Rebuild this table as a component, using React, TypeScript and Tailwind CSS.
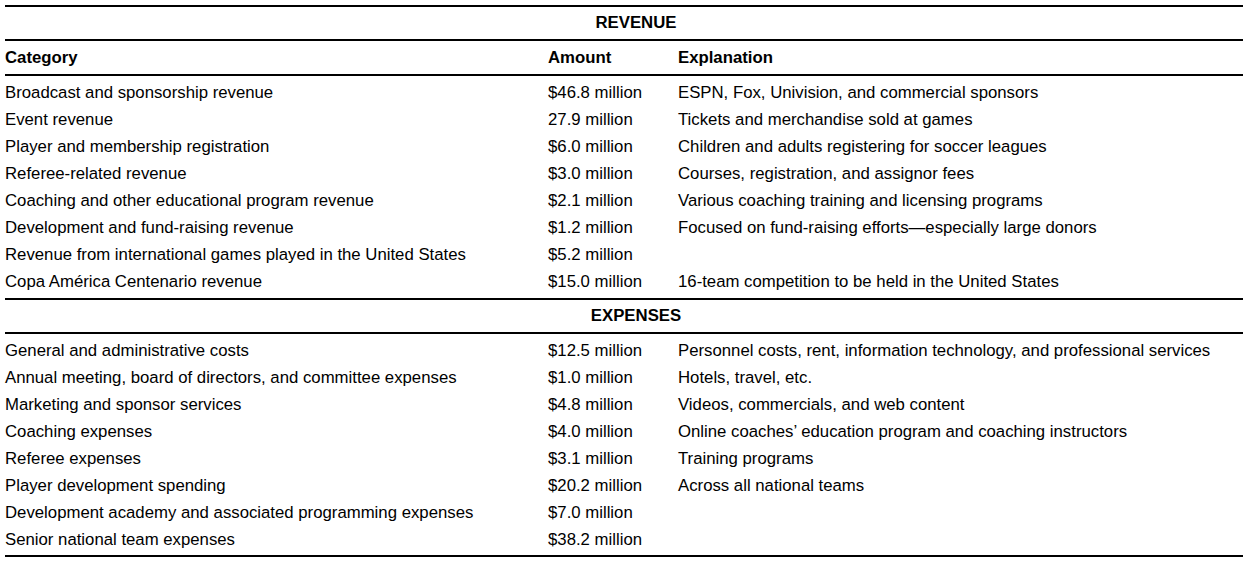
import React from 'react';

const revenue = [
  ['Broadcast and sponsorship revenue', '$46.8 million', 'ESPN, Fox, Univision, and commercial sponsors'],
  ['Event revenue', '27.9 million', 'Tickets and merchandise sold at games'],
  ['Player and membership registration', '$6.0 million', 'Children and adults registering for soccer leagues'],
  ['Referee-related revenue', '$3.0 million', 'Courses, registration, and assignor fees'],
  ['Coaching and other educational program revenue', '$2.1 million', 'Various coaching training and licensing programs'],
  ['Development and fund-raising revenue', '$1.2 million', 'Focused on fund-raising efforts\u2014especially large donors'],
  ['Revenue from international games played in the United States', '$5.2 million', ''],
  ['Copa Am\u00e9rica Centenario revenue', '$15.0 million', '16-team competition to be held in the United States'],
];

const expenses = [
  ['General and administrative costs', '$12.5 million', 'Personnel costs, rent, information technology, and professional services'],
  ['Annual meeting, board of directors, and committee expenses', '$1.0 million', 'Hotels, travel, etc.'],
  ['Marketing and sponsor services', '$4.8 million', 'Videos, commercials, and web content'],
  ['Coaching expenses', '$4.0 million', 'Online coaches\u2019 education program and coaching instructors'],
  ['Referee expenses', '$3.1 million', 'Training programs'],
  ['Player development spending', '$20.2 million', 'Across all national teams'],
  ['Development academy and associated programming expenses', '$7.0 million', ''],
  ['Senior national team expenses', '$38.2 million', ''],
];

const Row = ({ cells, bold = false }: { cells: string[]; bold?: boolean }) => (
  <div className={`grid grid-cols-[543px_130px_1fr] items-center h-[27px] leading-[27px] ${bold ? 'font-bold' : ''}`}>
    {cells.map((c, i) => (
      <div key={i} className="whitespace-nowrap">
        {c}
      </div>
    ))}
  </div>
);

const App = () => {
  return (
    <div className="w-[1243px] h-[564px] overflow-hidden bg-white text-black text-[16.75px] font-['Liberation_Sans',Arial,sans-serif]">
      <div className="ml-[5px] mt-[5px] w-[1262px]">
        {/* Revenue section */}
        <div className="border-y-2 border-black h-[36px] flex items-center justify-center font-bold">REVENUE</div>
        <div className="border-b-2 border-black h-[35px] flex items-center">
          <div className="w-full">
            <Row cells={['Category', 'Amount', 'Explanation']} bold />
          </div>
        </div>
        <div className="pt-[3px] pb-[3px]">
          {revenue.map((r, i) => (
            <Row key={i} cells={r} />
          ))}
        </div>

        {/* Expenses section */}
        <div className="border-y-2 border-black h-[36px] flex items-center justify-center font-bold">EXPENSES</div>
        <div className="pt-[3px] pb-[2px] border-b-2 border-black">
          {expenses.map((r, i) => (
            <Row key={i} cells={r} />
          ))}
        </div>
      </div>
    </div>
  );
};

export default App;
